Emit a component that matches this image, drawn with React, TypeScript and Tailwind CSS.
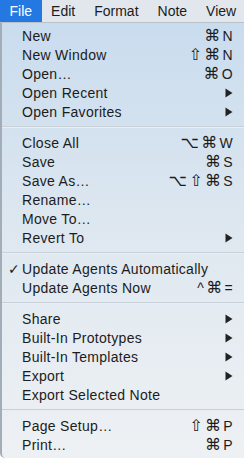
import React from 'react';

type Item =
  | { kind: 'sep' }
  | { kind: 'item'; label: string; keys?: string[]; sub?: boolean; checked?: boolean };

const items: Item[] = [
  { kind: 'item', label: 'New', keys: ['⌘', 'N'] },
  { kind: 'item', label: 'New Window', keys: ['⇧', '⌘', 'N'] },
  { kind: 'item', label: 'Open…', keys: ['⌘', 'O'] },
  { kind: 'item', label: 'Open Recent', sub: true },
  { kind: 'item', label: 'Open Favorites', sub: true },
  { kind: 'sep' },
  { kind: 'item', label: 'Close All', keys: ['⌥', '⌘', 'W'] },
  { kind: 'item', label: 'Save', keys: ['⌘', 'S'] },
  { kind: 'item', label: 'Save As…', keys: ['⌥', '⇧', '⌘', 'S'] },
  { kind: 'item', label: 'Rename…' },
  { kind: 'item', label: 'Move To…' },
  { kind: 'item', label: 'Revert To', sub: true },
  { kind: 'sep' },
  { kind: 'item', label: 'Update Agents Automatically', checked: true },
  { kind: 'item', label: 'Update Agents Now', keys: ['^', '⌘', '='] },
  { kind: 'sep' },
  { kind: 'item', label: 'Share', sub: true },
  { kind: 'item', label: 'Built-In Prototypes', sub: true },
  { kind: 'item', label: 'Built-In Templates', sub: true },
  { kind: 'item', label: 'Export', sub: true },
  { kind: 'item', label: 'Export Selected Note' },
  { kind: 'sep' },
  { kind: 'item', label: 'Page Setup…', keys: ['⇧', '⌘', 'P'] },
  { kind: 'item', label: 'Print…', keys: ['⌘', 'P'] },
];

const menus = ['File', 'Edit', 'Format', 'Note', 'View'];

function Arrow() {
  return (
    <svg width="8" height="10" viewBox="0 0 8 10" className="block">
      <path d="M0.5 0.5 L7.5 5 L0.5 9.5 Z" fill="#222" />
    </svg>
  );
}

export default function App() {
  return (
    <div
      className="w-[244px] h-[458px] overflow-hidden text-[#1c1c1c] bg-white"
      style={{ fontFamily: '"Liberation Sans", "DejaVu Sans", sans-serif' }}
    >
      {/* Menu bar */}
      <div className="h-[23px] flex bg-[#e2e7ed] border-b border-[#b9c2cb] text-[14px] whitespace-nowrap">
        {menus.map((m, i) => (
          <div
            key={m}
            className={`px-[9.5px] h-[22px] flex items-center leading-none ${
              i === 0 ? 'bg-[#2478e2] text-white' : ''
            }`}
          >
            {m}
          </div>
        ))}
      </div>

      {/* Dropdown */}
      <div className="h-[435px] border-l-2 border-[#a3adb8] rounded-bl-[5px] bg-gradient-to-b from-[#c9dcee] via-[#dfe8f0] to-[#eef1f4] pt-[3px] text-[14px] tracking-[0.3px]">
        {items.map((it, idx) =>
          it.kind === 'sep' ? (
            <div key={idx} className="h-[12px] flex items-center">
              <div className="w-full h-[2px] bg-[#c8d0d8] border-b border-[#e9eef3]" />
            </div>
          ) : (
            <div key={idx} className="h-[19px] flex items-center pl-[6px] pr-[11px]">
              <div className="w-[14px] text-[14px] leading-none">{it.checked ? '✓' : ''}</div>
              <div className="flex-1 leading-none">{it.label}</div>
              {it.keys && (
                <div className="flex items-center gap-[2px] leading-none">
                  {it.keys.map((k, j) => (
                    <span key={j} className={k.length === 1 && /[A-Z=^]/.test(k) ? '' : 'text-[16px]'}>
                      {k}
                    </span>
                  ))}
                </div>
              )}
              {it.sub && <Arrow />}
            </div>
          )
        )}
      </div>
    </div>
  );
}
